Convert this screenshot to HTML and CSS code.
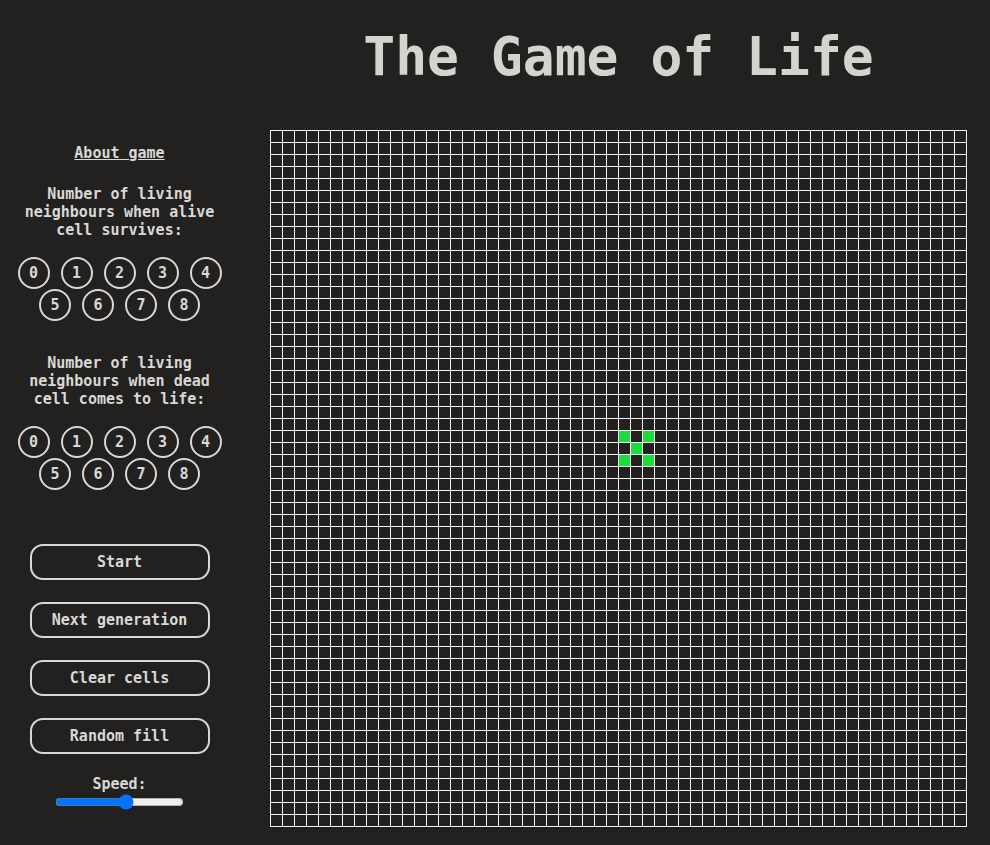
FILE: index.html
```html
<!DOCTYPE html>
<html lang="en">
<head>
<meta charset="utf-8">
<title>The Game of Life</title>
<link rel="stylesheet" href="styles.css">
</head>
<body>
<div class="page">
  <aside class="panel">
    <a class="about" href="#">About game</a>
    <p class="rule-title">Number of living neighbours when alive cell survives:</p>
    <div class="nums">
      <button class="num">0</button><button class="num">1</button><button class="num">2</button><button class="num">3</button><button class="num">4</button>
      <button class="num">5</button><button class="num">6</button><button class="num">7</button><button class="num">8</button>
    </div>
    <p class="rule-title second">Number of living neighbours when dead cell comes to life:</p>
    <div class="nums">
      <button class="num">0</button><button class="num">1</button><button class="num">2</button><button class="num">3</button><button class="num">4</button>
      <button class="num">5</button><button class="num">6</button><button class="num">7</button><button class="num">8</button>
    </div>
    <div class="actions">
      <button class="action">Start</button>
      <button class="action">Next generation</button>
      <button class="action">Clear cells</button>
      <button class="action">Random fill</button>
    </div>
    <label class="speed-label" for="speed">Speed:</label>
    <input class="speed" id="speed" type="range" min="0" max="100" value="56">
  </aside>
  <main class="board">
    <h1 class="title">The Game of Life</h1>
    <div class="grid" id="grid"></div>
  </main>
</div>
<script src="script.js"></script>
</body>
</html>
```

FILE: styles.css
```css
* { box-sizing: border-box; }
html, body {
  margin: 0;
  background: #222120;
  color: #d8d8d6;
  font-family: "DejaVu Sans Mono", monospace;
  font-weight: bold;
}
.page {
  display: flex;
  gap: 31px;
}
.panel {
  width: 239px;
  flex: none;
  display: flex;
  flex-direction: column;
  align-items: center;
  padding-top: 144px;
  font-size: 15px;
  line-height: 18px;
  text-align: center;
}
.about {
  color: #d8d8d6;
  text-decoration: underline;
  display: block;
}
.rule-title {
  margin: 23px 0 18px;
  width: 200px;
}
.rule-title.second { margin-top: 33px; }
.nums {
  display: flex;
  flex-wrap: wrap;
  justify-content: center;
  width: 239px;
}
.num {
  width: 32px;
  height: 32px;
  margin: 0 5.5px;
  padding: 0;
  border: 2px solid #d8d8d6;
  border-radius: 50%;
  background: transparent;
  color: #d8d8d6;
  font: inherit;
  font-weight: bold;
  line-height: 28px;
}
.actions {
  display: flex;
  flex-direction: column;
  gap: 22px;
  margin-top: 54px;
}
.action {
  width: 180px;
  height: 36px;
  border: 2px solid #d8d8d6;
  border-radius: 13px;
  background: transparent;
  color: #d8d8d6;
  font: inherit;
  font-weight: bold;
  padding: 0;
}
.speed-label {
  margin-top: 21px;
  display: block;
}
.speed {
  width: 129px;
  margin: 1px 0 0;
}
.board {
  display: flex;
  flex-direction: column;
  align-items: center;
  width: 697px;
}
.title {
  margin: 27px 0 43px;
  font-size: 53px;
  line-height: 60px;
  font-weight: bold;
  color: #d4d3d0;
}
.grid {
  display: grid;
  grid-template-columns: repeat(58, 11px);
  grid-auto-rows: 11px;
  gap: 1px;
  padding: 1px;
  background: #f4f4f4;
  width: 697px;
}
.cell { background: #222120; }
.cell.alive { background: #1cdc3c; }
```

FILE: script.js
```js
(function () {
  var grid = document.getElementById('grid');
  var size = 58;
  var alive = { '25,29': 1, '25,31': 1, '26,30': 1, '27,29': 1, '27,31': 1 };
  var frag = document.createDocumentFragment();
  for (var r = 0; r < size; r++) {
    for (var c = 0; c < size; c++) {
      var d = document.createElement('div');
      d.className = alive[r + ',' + c] ? 'cell alive' : 'cell';
      frag.appendChild(d);
    }
  }
  grid.appendChild(frag);
})();
```
